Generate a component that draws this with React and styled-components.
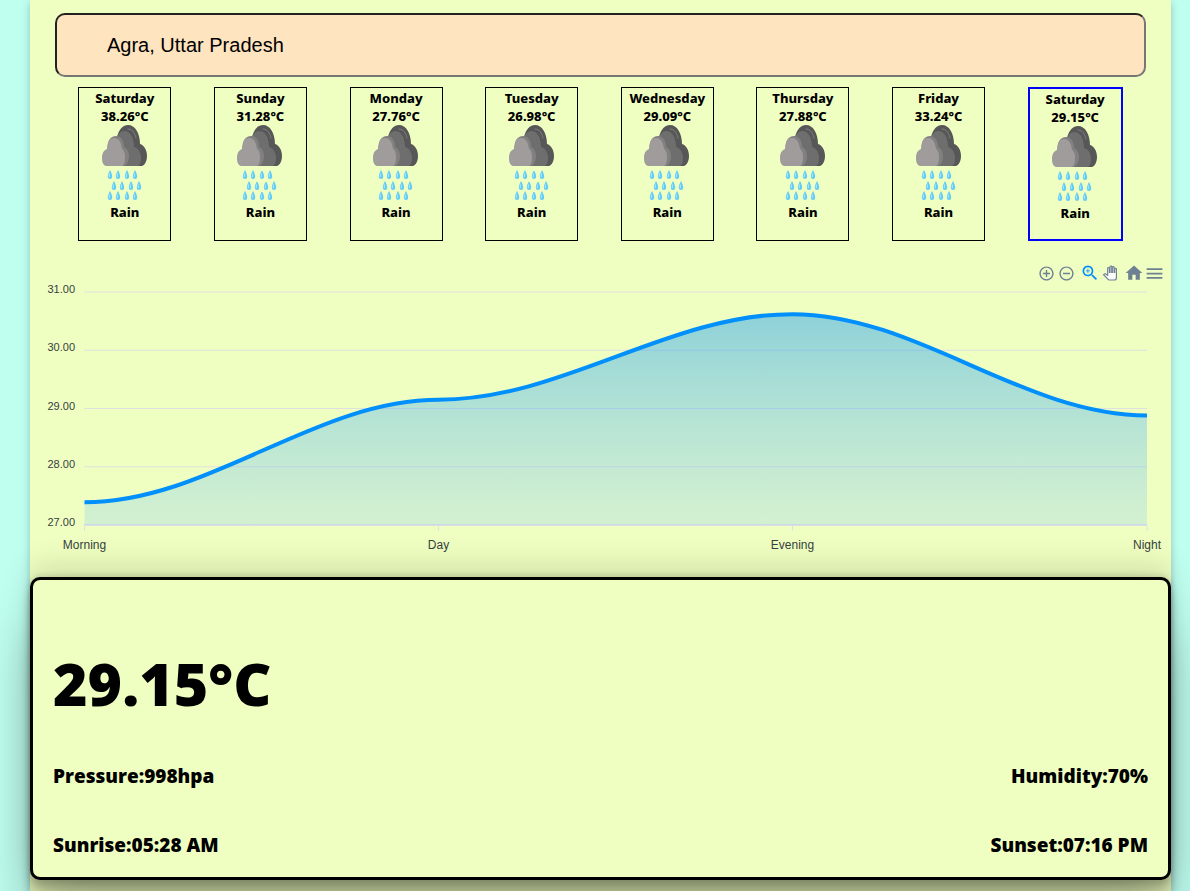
import React, { useState } from 'react'
import styled, { createGlobalStyle } from 'styled-components'
import { MdAddCircleOutline, MdRemoveCircleOutline, MdZoomIn, MdHome, MdMenu } from 'react-icons/md'

const GlobalStyle = createGlobalStyle`
* {
    box-sizing: border-box;
}
body {
    margin: 0;
    background-color: #bffff0;
    font-family: "Noto Sans", "Open Sans", sans-serif;
    color: black;
}
`
const Container = styled.main`
    min-height: 100vh;
    margin: 0 19px 0 30px;
    padding: 13px 0 10px;
    background-color: #efffc1;
    box-shadow: rgba(0, 0, 0, 0.24) 0px 3px 8px;
`
const SearchBar = styled.div`
    padding: 0 25px;
`
const Input = styled.input`
    display: block;
    width: 100%;
    height: 64px;
    padding: 0 50px;
    border: 2px solid;
    border-color: #212121 #767676 #767676 #212121;
    border-radius: 10px;
    background-color: #ffe4c0;
    font-family: "Liberation Sans", Arial, sans-serif;
    font-size: 20px;
    color: black;
    outline: none;
`
const Week = styled.div`
    display: flex;
    justify-content: space-around;
    padding: 0 27px;
    margin-top: 10px;
`
const DayCard = styled.button`
    display: flex;
    flex-direction: column;
    align-items: center;
    box-sizing: content-box;
    width: 91px;
    height: ${props => props.$selected ? '149px' : '151px'};
    padding: 1px 0 0;
    border: ${props => props.$selected ? '2px solid blue' : '1px solid black'};
    background-color: transparent;
    font-family: inherit;
    font-size: 13px;
    font-weight: 800;
    line-height: 18px;
    color: black;
    cursor: pointer;
`
const RainSvg = styled.svg`
    width: 46px;
    height: 78px;
`
const ChartBox = styled.section`
    margin-top: 22px;
`
const Toolbar = styled.div`
    display: flex;
    justify-content: flex-end;
    gap: 4px;
    padding-right: 7px;
`
const ToolGroup = styled.div`
    display: flex;
`
const Tool = styled.button`
    display: flex;
    align-items: center;
    justify-content: center;
    width: 20px;
    height: 20px;
    padding: 0;
    border: none;
    background-color: transparent;
    color: ${props => props.$active ? '#008ffb' : '#6e8192'};
    cursor: pointer;
    svg {
        flex: none;
    }
`
const Chart = styled.svg`
    display: block;
    width: 100%;
    font-family: "Liberation Sans", Helvetica, Arial, sans-serif;
    fill: #373d3f;
`
const Details = styled.section`
    padding: 61px 20px 19px;
    border: 3px solid black;
    border-radius: 10px;
    background-color: #efffc1;
    font-family: "Open Sans", "Noto Sans", sans-serif;
    box-shadow: rgba(0, 0, 0, 0.25) 0px 54px 55px, rgba(0, 0, 0, 0.12) 0px -12px 30px, rgba(0, 0, 0, 0.12) 0px 4px 6px, rgba(0, 0, 0, 0.17) 0px 12px 13px, rgba(0, 0, 0, 0.09) 0px -3px 5px;
`
const Temperature = styled.h1`
    margin: 0 0 38px;
    font-size: 59px;
    font-weight: 800;
    line-height: 84px;
`
const Row = styled.div`
    display: flex;
    justify-content: space-between;
    font-size: 19px;
    font-weight: 800;
    line-height: 26px;
    & + & {
        margin-top: 43px;
    }
`

const days = [
  { name: 'Saturday', temp: '38.26' },
  { name: 'Sunday', temp: '31.28' },
  { name: 'Monday', temp: '27.76' },
  { name: 'Tuesday', temp: '26.98' },
  { name: 'Wednesday', temp: '29.09' },
  { name: 'Thursday', temp: '27.88' },
  { name: 'Friday', temp: '33.24' },
  { name: 'Saturday', temp: '29.15' },
]

const points = [
  { label: 'Morning', x: 54.5, value: 27.39 },
  { label: 'Day', x: 408.5, value: 29.15 },
  { label: 'Evening', x: 762.5, value: 30.62 },
  { label: 'Night', x: 1117, value: 28.88 },
]

const drops = [
  [8, 45], [16, 45], [25, 45], [33, 45],
  [12, 56], [20, 56], [29, 56], [37, 56],
  [8, 66], [16, 66], [25, 66], [33, 66],
]

const toY = value => 242 - (value - 27) * 58.25

const line = points.map((p, i) => {
  if (i === 0) return `M ${p.x} ${toY(p.value)}`
  const prev = points[i - 1]
  const step = (p.x - prev.x) * 0.35
  return `C ${prev.x + step} ${toY(prev.value)} ${p.x - step} ${toY(p.value)} ${p.x} ${toY(p.value)}`
}).join(' ')

const Rain = () => {
  return (
    <RainSvg viewBox="0 0 46 78" aria-hidden="true">
      <path fill="#575757" d="M15 12C17 4 21 0 26 0c7 0 12 8 12 19 4 1 7 6 7 12 0 5-2 9-5 10H20z" />
      <path fill="#6e6e6e" d="M15 12c2-4 4-6 7-6 6 0 10 6 10 16 4 1 7 5 7 11 0 4-1 7-3 8H12z" />
      <path fill="#828080" d="M6 18c1-4 4-7 8-7 5 0 8 4 8 11 3 1 5 5 5 9 0 5-2 9-5 10H10z" />
      <path fill="#a09c9c" d="M5 24c0-7 3-11 7-11 5 0 7 4 8 11 2 1 3 4 3 8 0 5-1 8-3 9H4c-3-1-4-4-4-8 0-5 2-8 5-9z" />
      <path fill="none" stroke="#737373" strokeWidth="1.3" strokeLinecap="round" d="M26 4c4 0 7 4 8 9" />
      {drops.map(([x, y]) => (
        <g key={`${x}-${y}`}>
          <path fill="#62ccf8" d={`M${x} ${y}c-1 2-2.200 4.500-2.200 6.500a2.200 2.500 0 0 0 4.400 0c0-2-1.200-4.500-2.200-6.500z`} />
          <path fill="#a5e5fb" d={`M${x} ${y + 2}c-.6 2-1.400 3-1.400 4.500 0 1 1.400 1 1.400 0z`} />
        </g>
      ))}
    </RainSvg>
  )
}

const Forecast = () => {
  const [selected, setSelected] = useState(7)
  return (
    <Week>
      {days.map((day, i) => (
        <DayCard key={i} $selected={i === selected} onClick={() => setSelected(i)}>
          <span>{day.name}</span>
          <span>{day.temp}°C</span>
          <Rain />
          <span>Rain</span>
        </DayCard>
      ))}
    </Week>
  )
}

const TempChart = () => {
  return (
    <ChartBox>
      <Toolbar>
        <ToolGroup>
          <Tool aria-label="Zoom In"><MdAddCircleOutline size={17} /></Tool>
          <Tool aria-label="Zoom Out"><MdRemoveCircleOutline size={17} /></Tool>
        </ToolGroup>
        <ToolGroup>
          <Tool $active aria-label="Selection Zoom"><MdZoomIn size={20} /></Tool>
          <Tool aria-label="Panning">
            <svg width="14" height="14" viewBox="0 0 24 24" overflow="visible" fill="#fefefe" stroke="#6e8192" strokeWidth="2">
              <path d="M23 5.500V20c0 2.200-1.800 4-4 4h-7.300c-1.080 0-2.100-.43-2.850-1.190L1 14.830s1.260-1.230 1.300-1.250c.22-.19.49-.29.79-.29.22 0 .42.060.6.160.04.010 4.310 2.460 4.310 2.460V4c0-.83.67-1.500 1.500-1.500S11 3.170 11 4v7h1V1.500c0-.83.67-1.500 1.500-1.500S15 .67 15 1.500V11h1V2.500c0-.83.67-1.500 1.500-1.500s1.500.67 1.500 1.500V11h1V5.500c0-.83.67-1.500 1.500-1.500s1.500.67 1.500 1.500z" />
            </svg>
          </Tool>
        </ToolGroup>
        <ToolGroup>
          <Tool aria-label="Reset Zoom"><MdHome size={20} /></Tool>
          <Tool aria-label="Menu"><MdMenu size={21} /></Tool>
        </ToolGroup>
      </Toolbar>
      <Chart viewBox="0 0 1141 294" role="img" aria-label="Temperature through the day">
        <defs>
          <linearGradient id="area" x1="0" y1="0" x2="0" y2="1">
            <stop offset="0" stopColor="#008ffb" stopOpacity="0.41" />
            <stop offset="1" stopColor="#80c7fd" stopOpacity="0.25" />
          </linearGradient>
        </defs>
        {[31, 30, 29, 28, 27].map(value => (
          <g key={value}>
            <line x1="54" x2="1117" y1={toY(value)} y2={toY(value)} stroke="#e0e0e0" strokeWidth={value === 27 ? 2 : 1} />
            <text x="45" y={toY(value) + 1} fontSize="11" textAnchor="end">{value.toFixed(2)}</text>
          </g>
        ))}
        {points.map(p => (
          <g key={p.label}>
            <line x1={p.x} x2={p.x} y1="242" y2="248" stroke="#e0e0e0" />
            <text x={p.x} y="266" fontSize="12" textAnchor="middle">{p.label}</text>
          </g>
        ))}
        <path d={`${line} V 242 H 54.5 Z`} fill="url(#area)" />
        <path d={line} fill="none" stroke="#008ffb" strokeWidth="4" />
      </Chart>
    </ChartBox>
  )
}

const App = () => {
  const [city, setCity] = useState('Agra, Uttar Pradesh')
  return (
    <>
      <GlobalStyle />
      <Container>
        <SearchBar>
          <Input aria-label="City" value={city} onChange={e => setCity(e.target.value)} />
        </SearchBar>
        <Forecast />
        <TempChart />
        <Details>
          <Temperature>29.15°C</Temperature>
          <Row>
            <span>Pressure:998hpa</span>
            <span>Humidity:70%</span>
          </Row>
          <Row>
            <span>Sunrise:05:28 AM</span>
            <span>Sunset:07:16 PM</span>
          </Row>
        </Details>
      </Container>
    </>
  )
}

export default App
